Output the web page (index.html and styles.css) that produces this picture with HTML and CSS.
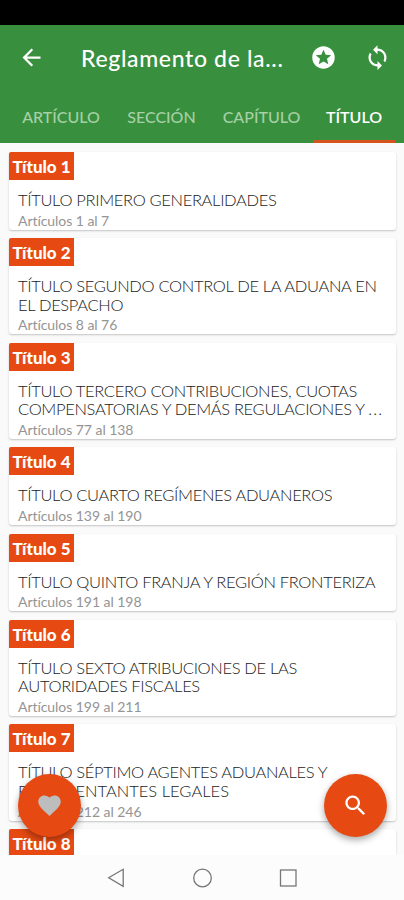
FILE: index.html
```html
<!DOCTYPE html>
<html lang="es">

<head>
    <meta charset="UTF-8">
    <meta name="viewport" content="width=device-width, initial-scale=1.0">
    <title>Reglamento</title>
    <link rel="stylesheet" href="styles.css">
</head>

<body>
    <div class="app">
        <div class="status-bar"></div>
        <header class="header">
            <div class="toolbar">
                <svg class="icon back" viewBox="0 0 24 24"><path d="M20 11H7.83l5.59-5.59L12 4l-8 8 8 8 1.41-1.41L7.83 13H20v-2z"/></svg>
                <h1>Reglamento de la...</h1>
                <svg class="icon stars" viewBox="0 0 24 24"><path d="M11.99 2C6.47 2 2 6.48 2 12s4.47 10 9.99 10C17.52 22 22 17.52 22 12S17.52 2 11.99 2zm4.24 16L12 15.45 7.77 18l1.12-4.81-3.73-3.23 4.92-.42L12 5l1.92 4.53 4.92.42-3.73 3.23L16.23 18z"/></svg>
                <svg class="icon sync" viewBox="0 0 24 24"><path d="M12 4V1L8 5l4 4V6c3.31 0 6 2.69 6 6 0 1.01-.25 1.97-.7 2.8l1.46 1.46C19.54 15.03 20 13.57 20 12c0-4.42-3.58-8-8-8zm0 14c-3.31 0-6-2.69-6-6 0-1.01.25-1.97.7-2.8L5.24 7.74C4.46 8.97 4 10.43 4 12c0 4.42 3.58 8 8 8v3l4-4-4-4v3z"/></svg>
            </div>
            <nav class="tabs">
                <a class="tab tab-articulo">ARTÍCULO</a>
                <a class="tab tab-seccion">SECCIÓN</a>
                <a class="tab tab-capitulo">CAPÍTULO</a>
                <a class="tab tab-titulo active">TÍTULO</a>
            </nav>
        </header>

        <main class="list">
            <div class="card">
                <span class="badge">Título 1</span>
                <h2>TÍTULO PRIMERO GENERALIDADES</h2>
                <p>Artículos 1 al 7</p>
            </div>
            <div class="card">
                <span class="badge">Título 2</span>
                <h2>TÍTULO SEGUNDO CONTROL DE LA ADUANA EN<br>EL DESPACHO</h2>
                <p>Artículos 8 al 76</p>
            </div>
            <div class="card">
                <span class="badge">Título 3</span>
                <h2>TÍTULO TERCERO CONTRIBUCIONES, CUOTAS<br>COMPENSATORIAS Y DEMÁS REGULACIONES Y <span class="dots">...</span></h2>
                <p>Artículos 77 al 138</p>
            </div>
            <div class="card">
                <span class="badge">Título 4</span>
                <h2>TÍTULO CUARTO REGÍMENES ADUANEROS</h2>
                <p>Artículos 139 al 190</p>
            </div>
            <div class="card">
                <span class="badge">Título 5</span>
                <h2>TÍTULO QUINTO FRANJA Y REGIÓN FRONTERIZA</h2>
                <p>Artículos 191 al 198</p>
            </div>
            <div class="card">
                <span class="badge">Título 6</span>
                <h2>TÍTULO SEXTO ATRIBUCIONES DE LAS<br>AUTORIDADES FISCALES</h2>
                <p>Artículos 199 al 211</p>
            </div>
            <div class="card">
                <span class="badge">Título 7</span>
                <h2>TÍTULO SÉPTIMO AGENTES ADUANALES Y<br><span class="loose">REPRESENTANTES LEGALES</span></h2>
                <p>Artículos 212 al 246</p>
            </div>
            <div class="card">
                <span class="badge">Título 8</span>
            </div>
        </main>

        <button class="fab fab-left">
            <svg class="heart" viewBox="0 0 24 24"><path d="M12 21.35l-1.45-1.32C5.4 15.36 2 12.28 2 8.5 2 5.42 4.42 3 7.5 3c1.74 0 3.41.81 4.5 2.09C13.09 3.81 14.76 3 16.5 3 19.58 3 22 5.42 22 8.5c0 3.78-3.4 6.86-8.55 11.54L12 21.35z"/></svg>
        </button>
        <button class="fab fab-right">
            <svg class="search" viewBox="0 0 24 24"><path d="M15.5 14h-.79l-.28-.27C15.41 12.59 16 11.11 16 9.5 16 5.91 13.09 3 9.5 3S3 5.91 3 9.5 5.91 16 9.5 16c1.61 0 3.09-.59 4.23-1.57l.27.28v.79l5 4.99L20.49 19l-4.99-5zm-6 0C7.01 14 5 11.99 5 9.5S7.01 5 9.5 5 14 7.01 14 9.5 11.99 14 9.5 14z"/></svg>
        </button>

        <footer class="nav-bar">
            <svg viewBox="0 0 20 20"><path d="M17.2 1.3v17L2.7 9.8z"/></svg>
            <svg viewBox="0 0 20 20"><circle cx="10.5" cy="10" r="8.8"/></svg>
            <svg viewBox="0 0 20 20"><rect x="2.5" y="2" width="15.5" height="16"/></svg>
        </footer>
    </div>
</body>

</html>
```

FILE: styles.css
```css
* {
    box-sizing: border-box;
}

body {
    margin: 0;
    background-color: #fafafa;
    font-family: Lato, sans-serif;
}

.app {
    position: relative;
    display: flex;
    flex-direction: column;
    height: 900px;
    overflow: hidden;
}

.status-bar {
    flex: none;
    height: 25px;
    background-color: #000;
}

.header {
    flex: none;
    height: 118px;
    background-color: #388f3d;
    color: #fff;
}

.toolbar {
    display: flex;
    align-items: center;
    height: 65px;
    padding: 0 13px 0 18px;
}

.toolbar h1 {
    flex: 1;
    margin: 1px 0 0 36px;
    font-size: 23px;
    font-weight: 500;
    letter-spacing: 0.65px;
    white-space: nowrap;
}

.icon {
    flex: none;
    width: 27px;
    height: 27px;
    fill: #fff;
}

.stars {
    margin-right: 27px;
}

.tabs {
    display: flex;
    height: 53px;
    padding-left: 9px;
}

.tab {
    display: flex;
    align-items: center;
    justify-content: center;
    height: 53px;
    padding-bottom: 1px;
    font-size: 16px;
    font-weight: 500;
    color: #a6d0a6;
}

.tab-articulo {
    width: 104px;
}

.tab-seccion {
    width: 97px;
}

.tab-capitulo {
    width: 103px;
}

.tab-titulo {
    width: 82px;
}

.tab.active {
    color: #fff;
    font-weight: 600;
    box-shadow: inset 0 -3px #d3531b;
}

.list {
    flex: none;
    display: flex;
    flex-direction: column;
    gap: 8.5px;
    height: 712px;
    padding: 9px 8px 0 9px;
    overflow: hidden;
}

.card {
    flex: none;
    border-radius: 3px;
    background-color: #fff;
    box-shadow: 0 1px 2px rgba(0, 0, 0, 0.22);
}

.badge {
    display: block;
    width: 65px;
    height: 28px;
    border-radius: 2px 0 0 0;
    background-color: #e64912;
    color: #fff;
    font-size: 17px;
    font-weight: 900;
    line-height: 30px;
    text-align: center;
}

.card h2 {
    margin: 11px 0 0 9px;
    color: #222;
    font-size: 16.5px;
    font-weight: 300;
    letter-spacing: -0.33px;
    line-height: 18.6px;
    white-space: nowrap;
}

.dots {
    letter-spacing: 1.2px;
}

.loose {
    letter-spacing: 0;
}

.card p {
    margin: 2px 0 0 9px;
    color: #949494;
    font-size: 14px;
    letter-spacing: -0.05px;
    line-height: 18px;
}

.fab {
    position: absolute;
    top: 774px;
    display: flex;
    align-items: center;
    justify-content: center;
    width: 63px;
    height: 63px;
    padding: 0;
    border: none;
    border-radius: 50%;
    background-color: #e64912;
    box-shadow: 0 3px 7px rgba(0, 0, 0, 0.35);
}

.fab-left {
    left: 18px;
}

.fab-right {
    left: 324px;
}

.fab svg {
    width: 27px;
    height: 27px;
}

.heart {
    fill: #bdbdbd;
}

.search {
    fill: #fff;
}

.nav-bar {
    display: flex;
    gap: 66px;
    height: 45px;
    padding: 13px 0 0 106px;
    background-color: #fcfcfc;
}

.nav-bar svg {
    width: 20px;
    height: 20px;
    fill: none;
    stroke: #777;
    stroke-width: 1.3;
}
```
